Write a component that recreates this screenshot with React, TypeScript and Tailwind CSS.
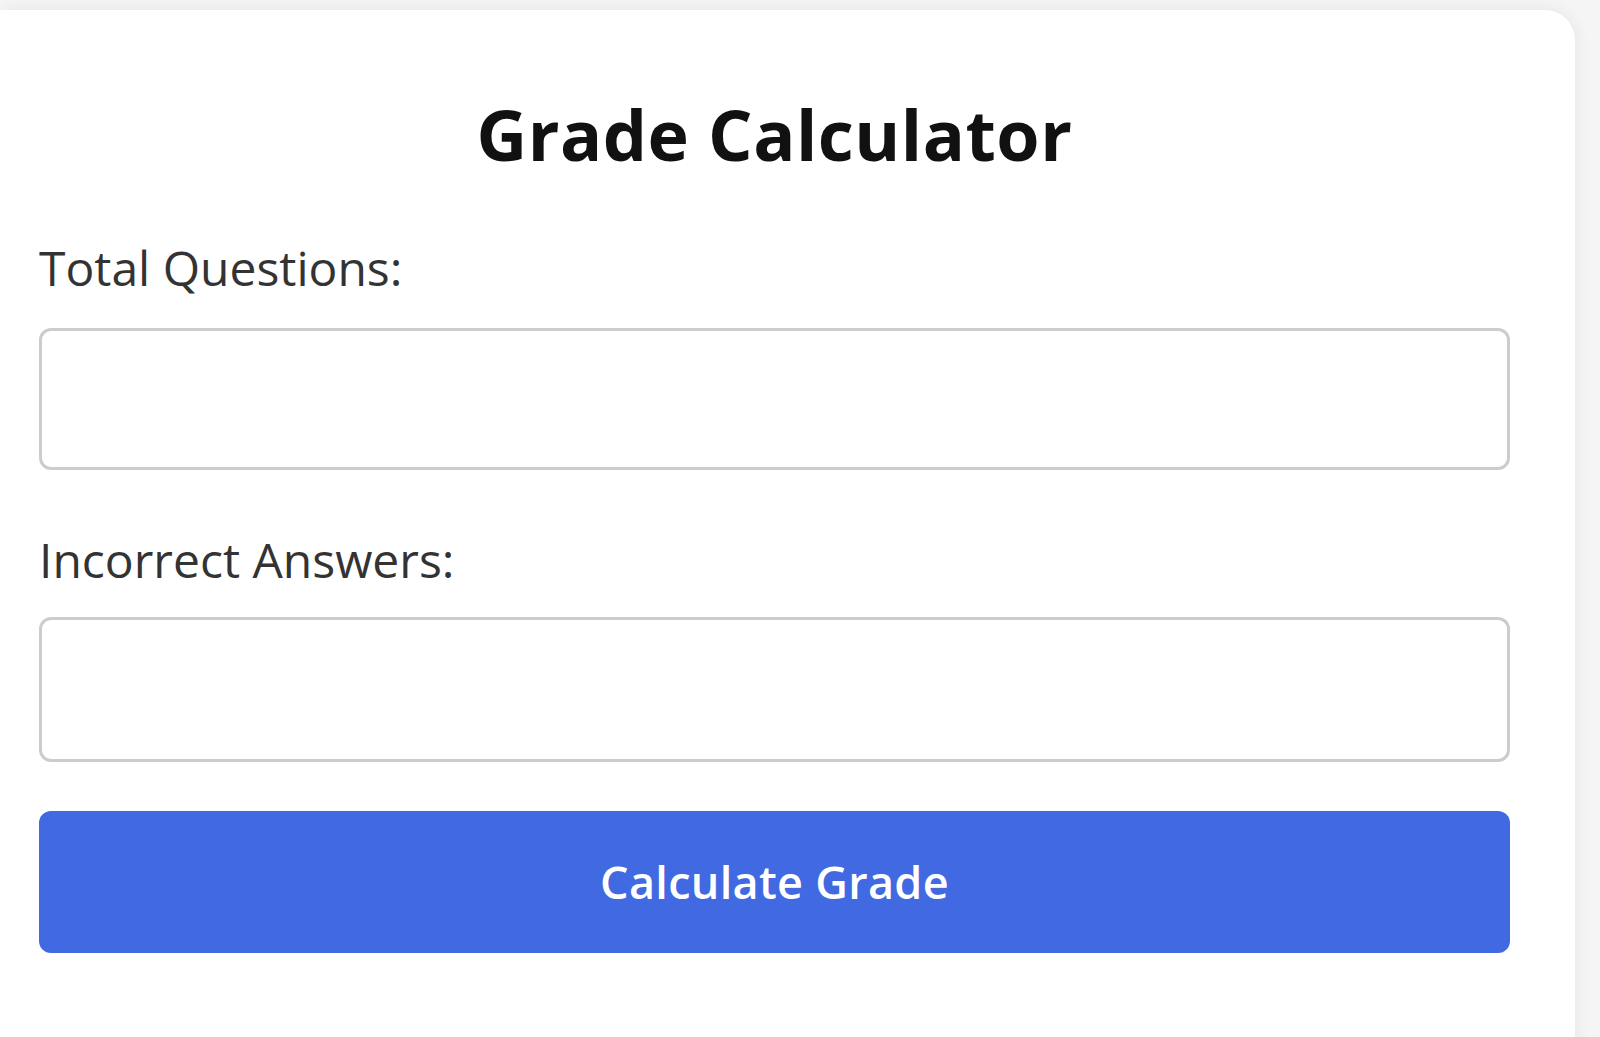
import React from "react";

export default function App() {
  return (
    <div className="min-h-screen w-full overflow-hidden bg-[#f5f5f5] pt-[10px] font-['Open_Sans',sans-serif]">
      <div className="w-[1575px] h-[1040px] bg-white rounded-tr-[30px] shadow-[0_0_18px_rgba(0,0,0,0.07)] pl-[39px] pr-[65px] pt-[89px]">
        <h1 className="text-center font-bold text-[70px] leading-[70px] tracking-[0.5px] text-[#111111]">Grade Calculator</h1>
        <label className="block mt-[75px] text-[48px] leading-[48px] text-[#333333]">Total Questions:</label>
        <input type="number" className="block mt-[36px] w-full h-[142px] border-[3px] border-[#cccccc] rounded-[12px] bg-white outline-none" />
        <label className="block mt-[66px] text-[48px] leading-[48px] text-[#333333]">Incorrect Answers:</label>
        <input type="number" className="block mt-[33px] w-full h-[145px] border-[3px] border-[#cccccc] rounded-[12px] bg-white outline-none" />
        <button className="block mt-[49px] w-full h-[142px] rounded-[12px] bg-[#4169e1] text-white text-[45px] font-semibold tracking-[0.3px]">Calculate Grade</button>
      </div>
    </div>
  );
}
